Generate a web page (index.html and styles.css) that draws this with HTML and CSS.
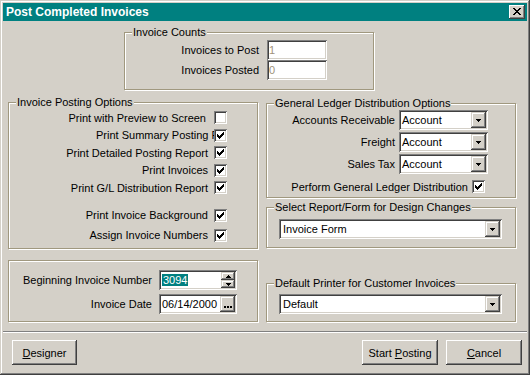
FILE: index.html
```html
<!DOCTYPE html>
<html lang="en">
<head>
    <meta charset="UTF-8">
    <meta name="viewport" content="width=device-width, initial-scale=1.0">
    <title>Post Completed Invoices</title>
    <link rel="stylesheet" href="styles.css">
</head>
<body>
    <div class="window">
        <div class="titlebar">
            <span class="title">Post Completed Invoices</span>
            <button class="close">
                <svg width="8" height="7" viewBox="0 0 8 7"><path d="M0 0h2v1h-2z M6 0h2v1h-2z M1 1h2v1h-2z M5 1h2v1h-2z M2 2h4v1h-4z M3 3h2v1h-2z M2 4h4v1h-4z M1 5h2v1h-2z M5 5h2v1h-2z M0 6h2v1h-2z M6 6h2v1h-2z" fill="#000"/></svg>
            </button>
        </div>

        <div class="client">
            <fieldset class="group counts">
                <legend>Invoice Counts</legend>
                <div class="count-row"><label>Invoices to Post</label><div class="field disabled">1</div></div>
                <div class="count-row"><label>Invoices Posted</label><div class="field disabled">0</div></div>
            </fieldset>

            <div class="columns">
                <div class="col">
                    <fieldset class="group posting">
                        <legend>Invoice Posting Options</legend>
                        <div class="check-row"><span class="wide">Print with Preview to Screen</span><span class="check"></span></div>
                        <div class="check-row"><span class="cut">Print Summary Posting Report</span><span class="check on"><svg width="7" height="7" viewBox="0 0 7 7"><path d="M6 0h1v1h-1z M5 1h2v1h-2z M0 2h1v1h-1z M4 2h3v1h-3z M0 3h2v1h-2z M3 3h3v1h-3z M0 4h5v1h-5z M1 5h3v1h-3z M2 6h1v1h-1z" fill="#000"/></svg></span></div>
                        <div class="check-row"><span>Print Detailed Posting Report</span><span class="check on"><svg width="7" height="7" viewBox="0 0 7 7"><path d="M6 0h1v1h-1z M5 1h2v1h-2z M0 2h1v1h-1z M4 2h3v1h-3z M0 3h2v1h-2z M3 3h3v1h-3z M0 4h5v1h-5z M1 5h3v1h-3z M2 6h1v1h-1z" fill="#000"/></svg></span></div>
                        <div class="check-row"><span>Print Invoices</span><span class="check on"><svg width="7" height="7" viewBox="0 0 7 7"><path d="M6 0h1v1h-1z M5 1h2v1h-2z M0 2h1v1h-1z M4 2h3v1h-3z M0 3h2v1h-2z M3 3h3v1h-3z M0 4h5v1h-5z M1 5h3v1h-3z M2 6h1v1h-1z" fill="#000"/></svg></span></div>
                        <div class="check-row"><span>Print G/L Distribution Report</span><span class="check on"><svg width="7" height="7" viewBox="0 0 7 7"><path d="M6 0h1v1h-1z M5 1h2v1h-2z M0 2h1v1h-1z M4 2h3v1h-3z M0 3h2v1h-2z M3 3h3v1h-3z M0 4h5v1h-5z M1 5h3v1h-3z M2 6h1v1h-1z" fill="#000"/></svg></span></div>
                        <div class="check-row spaced"><span>Print Invoice Background</span><span class="check on"><svg width="7" height="7" viewBox="0 0 7 7"><path d="M6 0h1v1h-1z M5 1h2v1h-2z M0 2h1v1h-1z M4 2h3v1h-3z M0 3h2v1h-2z M3 3h3v1h-3z M0 4h5v1h-5z M1 5h3v1h-3z M2 6h1v1h-1z" fill="#000"/></svg></span></div>
                        <div class="check-row last"><span>Assign Invoice Numbers</span><span class="check on"><svg width="7" height="7" viewBox="0 0 7 7"><path d="M6 0h1v1h-1z M5 1h2v1h-2z M0 2h1v1h-1z M4 2h3v1h-3z M0 3h2v1h-2z M3 3h3v1h-3z M0 4h5v1h-5z M1 5h3v1h-3z M2 6h1v1h-1z" fill="#000"/></svg></span></div>
                    </fieldset>

                    <div class="group numbers">
                        <div class="field-row">
                            <label>Beginning Invoice Number</label>
                            <div class="field entry">
                                <span class="value"><span class="sel">3094</span></span>
                                <span class="spin">
                                    <span class="spin-btn"><svg width="5" height="3" viewBox="0 0 5 3"><path d="M2 0h1v1h-1z M1 1h3v1h-3z M0 2h5v1h-5z" fill="#000"/></svg></span>
                                    <span class="spin-btn"><svg width="5" height="3" viewBox="0 0 5 3"><path d="M0 0h5v1h-5z M1 1h3v1h-3z M2 2h1v1h-1z" fill="#000"/></svg></span>
                                </span>
                            </div>
                        </div>
                        <div class="field-row">
                            <label>Invoice Date</label>
                            <div class="field entry">
                                <span class="value">06/14/2000</span>
                                <span class="dots"><svg width="8" height="2" viewBox="0 0 8 2"><path d="M0 0h2v2h-2z M3 0h2v2h-2z M6 0h2v2h-2z" fill="#000"/></svg></span>
                            </div>
                        </div>
                    </div>
                </div>

                <div class="col">
                    <fieldset class="group ledger">
                        <legend>General Ledger Distribution Options</legend>
                        <div class="combo-row">
                            <label>Accounts Receivable</label>
                            <div class="combo"><span class="value">Account</span><span class="drop"><svg width="5" height="3" viewBox="0 0 5 3"><path d="M0 0h5v1h-5z M1 1h3v1h-3z M2 2h1v1h-1z" fill="#000"/></svg></span></div>
                        </div>
                        <div class="combo-row">
                            <label>Freight</label>
                            <div class="combo"><span class="value">Account</span><span class="drop"><svg width="5" height="3" viewBox="0 0 5 3"><path d="M0 0h5v1h-5z M1 1h3v1h-3z M2 2h1v1h-1z" fill="#000"/></svg></span></div>
                        </div>
                        <div class="combo-row">
                            <label>Sales Tax</label>
                            <div class="combo"><span class="value">Account</span><span class="drop"><svg width="5" height="3" viewBox="0 0 5 3"><path d="M0 0h5v1h-5z M1 1h3v1h-3z M2 2h1v1h-1z" fill="#000"/></svg></span></div>
                        </div>
                        <div class="check-row"><span>Perform General Ledger Distribution</span><span class="check on"><svg width="7" height="7" viewBox="0 0 7 7"><path d="M6 0h1v1h-1z M5 1h2v1h-2z M0 2h1v1h-1z M4 2h3v1h-3z M0 3h2v1h-2z M3 3h3v1h-3z M0 4h5v1h-5z M1 5h3v1h-3z M2 6h1v1h-1z" fill="#000"/></svg></span></div>
                    </fieldset>

                    <fieldset class="group design">
                        <legend>Select Report/Form for Design Changes</legend>
                        <div class="combo"><span class="value">Invoice Form</span><span class="drop"><svg width="5" height="3" viewBox="0 0 5 3"><path d="M0 0h5v1h-5z M1 1h3v1h-3z M2 2h1v1h-1z" fill="#000"/></svg></span></div>
                    </fieldset>

                    <fieldset class="group printer">
                        <legend>Default Printer for Customer Invoices</legend>
                        <div class="combo"><span class="value">Default</span><span class="drop"><svg width="5" height="3" viewBox="0 0 5 3"><path d="M0 0h5v1h-5z M1 1h3v1h-3z M2 2h1v1h-1z" fill="#000"/></svg></span></div>
                    </fieldset>
                </div>
            </div>
        </div>

        <div class="footer">
            <button class="btn designer"><u>D</u>esigner</button>
            <button class="btn start">Start <u>P</u>osting</button>
            <button class="btn cancel"><u>C</u>ancel</button>
        </div>
    </div>
</body>
</html>
```

FILE: styles.css
```css
* {
    box-sizing: border-box;
}

body {
    margin: 0;
    background-color: #d4d0c8;
    font-family: "Liberation Sans", Arial, sans-serif;
    font-size: 11px;
    color: #000;
}

.window {
    width: 530px;
    height: 375px;
    padding: 3px;
    display: flex;
    flex-direction: column;
    background-color: #d4d0c8;
    box-shadow: inset -1px -1px #404040, inset 1px 1px #d4d0c8, inset -2px -2px #808080, inset 2px 2px #fff;
}

.titlebar {
    height: 18px;
    flex: none;
    display: flex;
    align-items: center;
    justify-content: space-between;
    padding: 0 2px 0 3px;
    background-color: #008080;
}

.title {
    color: #fff;
    font-weight: bold;
    font-size: 12px;
}

.close {
    width: 16px;
    height: 14px;
    padding: 3px 0 0 4px;
    border: none;
    display: flex;
    align-items: flex-start;
    background-color: #d4d0c8;
    box-shadow: inset -1px -1px #404040, inset 1px 1px #fff, inset -2px -2px #808080, inset 2px 2px #d4d0c8;
}

.close svg, .check svg, .drop svg, .spin-btn svg, .dots svg {
    display: block;
}

.client {
    height: 310px;
    flex: none;
    padding: 5px 10px 0 5px;
}

/* etched group boxes */
.group {
    margin: 0;
    padding: 0;
    min-width: 0;
    border: 1px solid #a0987f;
    box-shadow: inset 1px 1px #fff, 1px 1px #fff;
}

.group legend {
    margin-left: 7px;
    padding: 0 1px;
    line-height: 13px;
    background-color: #d4d0c8;
}

.counts {
    width: 250px;
    margin-left: 116px;
    padding: 1px 0 9px;
}

.count-row {
    display: flex;
    align-items: center;
    gap: 8px;
}

.count-row label {
    width: 134px;
    text-align: right;
}

.field {
    height: 20px;
    background-color: #fff;
    box-shadow: inset 1px 1px #808080, inset -1px -1px #fff, inset 2px 2px #404040, inset -2px -2px #d4d0c8;
    padding: 2px;
    line-height: 16px;
}

.field.disabled {
    width: 60px;
    color: #a0927a;
}

.columns {
    display: flex;
    gap: 8px;
    margin-top: 6px;
}

.col {
    width: 250px;
    display: flex;
    flex-direction: column;
}

.posting {
    padding: 0 30px 4px 0;
}

.check-row {
    display: flex;
    justify-content: flex-end;
    align-items: center;
    gap: 6px;
    height: 17.5px;
    white-space: nowrap;
}

.check-row.spaced {
    margin-top: 10px;
}

.check-row.last {
    margin-top: 2.5px;
}

.wide {
    padding-right: 2px;
}

/* label runs under its checkbox, as in the original form */
.cut {
    width: 118px;
    overflow: hidden;
    margin-right: -6px;
}

.check {
    width: 13px;
    height: 13px;
    flex: none;
    padding: 3px;
    background-color: #fff;
    box-shadow: inset 1px 1px #808080, inset -1px -1px #fff, inset 2px 2px #404040, inset -2px -2px #d4d0c8;
}

.numbers {
    margin-top: 11px;
    padding: 9px 20px 7px 0;
    display: flex;
    flex-direction: column;
    gap: 4px;
}

.field-row {
    display: flex;
    justify-content: flex-end;
    align-items: center;
    gap: 7px;
}

.entry {
    width: 78px;
    display: flex;
}

.entry .value {
    flex: 1;
    padding-left: 1px;
    white-space: nowrap;
    overflow: hidden;
}

.sel {
    background-color: #008080;
    color: #fff;
    padding: 0 1px;
}

.spin {
    width: 14px;
    display: flex;
    flex-direction: column;
}

.spin-btn, .dots, .drop {
    display: flex;
    align-items: center;
    justify-content: center;
    background-color: #d4d0c8;
    box-shadow: inset -1px -1px #404040, inset 1px 1px #d4d0c8, inset -2px -2px #808080, inset 2px 2px #fff;
}

.spin-btn {
    height: 8px;
}

.dots {
    width: 15px;
    padding-top: 5px;
}

.ledger {
    margin-top: 1px;
    padding: 0 27px 2px 0;
}

.combo-row {
    display: flex;
    justify-content: flex-end;
    align-items: center;
    gap: 4px;
}

.combo-row + .combo-row {
    margin-top: 2px;
}

.combo {
    height: 20px;
    display: flex;
    padding: 2px;
    background-color: #fff;
    box-shadow: inset 1px 1px #808080, inset -1px -1px #fff, inset 2px 2px #404040, inset -2px -2px #d4d0c8;
}

.combo .value {
    flex: 1;
    padding-left: 1px;
    line-height: 16px;
    white-space: nowrap;
}

.drop {
    width: 15px;
    flex: none;
}

.ledger .combo {
    width: 89px;
}

.ledger .check-row {
    margin-top: 4px;
    height: 17px;
    gap: 4px;
    padding-right: 3px;
}

.design {
    margin-top: 3px;
    padding: 5px 0 8px;
}

.printer {
    margin-top: 29px;
    padding: 4px 0 7px;
}

.design .combo, .printer .combo {
    margin: 0 13px 0 12px;
}

.design .value, .printer .value {
    padding-left: 2px;
}

.footer {
    flex: 1;
    display: flex;
    align-items: flex-start;
    padding: 9px 5px 0 9px;
    box-shadow: inset 0 1px #808080, inset 0 2px #fff;
}

.btn {
    height: 25px;
    padding: 0;
    border: none;
    font: inherit;
    color: #000;
    background-color: #d4d0c8;
    box-shadow: inset -1px -1px #404040, inset 1px 1px #fff, inset -2px -2px #808080, inset 2px 2px #d4d0c8;
}

.designer {
    width: 65px;
}

.start {
    width: 76px;
    margin-left: auto;
}

.cancel {
    width: 76px;
    margin-left: 8px;
}
```
